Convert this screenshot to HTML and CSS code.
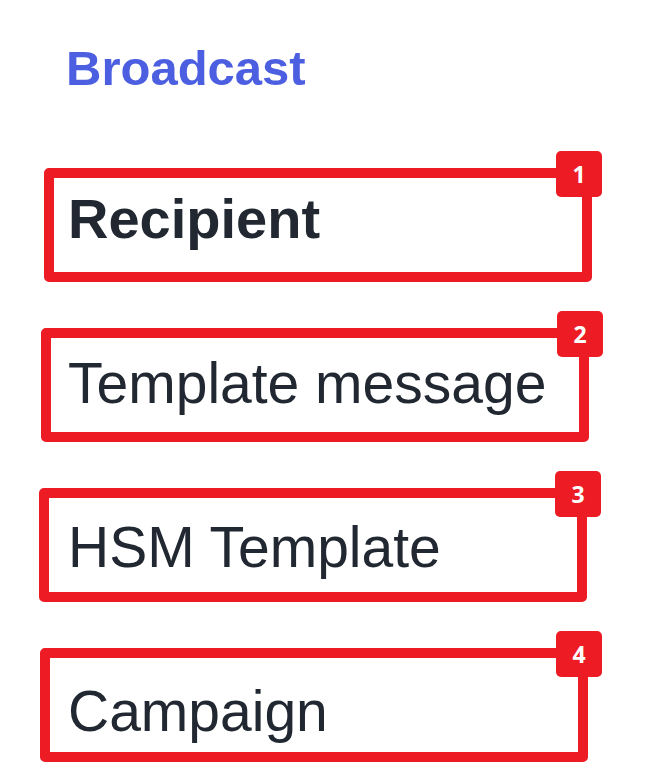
FILE: index.html
```html
<!DOCTYPE html>
<html lang="en">
<head>
    <meta charset="UTF-8">
    <meta name="viewport" content="width=device-width, initial-scale=1.0">
    <title>Broadcast</title>
    <link rel="stylesheet" href="styles.css">
</head>
<body>

<div class="sidebar">
    <h1 class="sidebar-title">Broadcast</h1>

    <ul class="steps">
        <li class="step step-active">
            Recipient
            <span class="step-badge">1</span>
        </li>
        <li class="step">
            Template message
            <span class="step-badge">2</span>
        </li>
        <li class="step">
            HSM Template
            <span class="step-badge">3</span>
        </li>
        <li class="step">
            Campaign
            <span class="step-badge">4</span>
        </li>
    </ul>
</div>

</body>
</html>
```

FILE: styles.css
```css
body {
    font-family: "Liberation Sans", Arial, sans-serif;
    margin: 0;
    padding: 0;
    background-color: #fff;
    color: #222831;
}

.sidebar {
    padding-top: 40px;
}

.sidebar-title {
    margin: 0 0 72px 66px;
    font-size: 49px;
    line-height: 56px;
    font-weight: bold;
    color: #4b5fe0;
}

.steps {
    list-style-type: none;
    margin: 0;
    padding: 0;
    display: flex;
    flex-direction: column;
    gap: 46px;
}

.step {
    position: relative;
    box-sizing: border-box;
    width: 548px;
    height: 114px;
    border: 10px solid #ed1c24;
    border-radius: 5px;
    font-size: 57px;
    line-height: 64px;
    white-space: nowrap;
}

.step-active {
    font-size: 56px;
    font-weight: bold;
}

/* the highlight boxes are not perfectly lined up */
.step:nth-child(1) {
    margin-left: 44px;
    padding: 9px 0 0 14px;
}

.step:nth-child(2) {
    margin-left: 41px;
    padding: 13px 0 0 17px;
}

.step:nth-child(3) {
    margin-left: 39px;
    padding: 17px 0 0 19px;
}

.step:nth-child(4) {
    margin-left: 40px;
    padding: 21px 0 0 18px;
}

.step-badge {
    position: absolute;
    top: -27px;
    right: -24px;
    width: 46px;
    height: 46px;
    display: flex;
    align-items: center;
    justify-content: center;
    background-color: #ed1c24;
    color: #fff;
    border-radius: 5px;
    font-family: "Open Sans", sans-serif;
    font-size: 23px;
    font-weight: bold;
    line-height: 1;
}

.step:nth-child(1) .step-badge {
    right: -20px;
}
```
